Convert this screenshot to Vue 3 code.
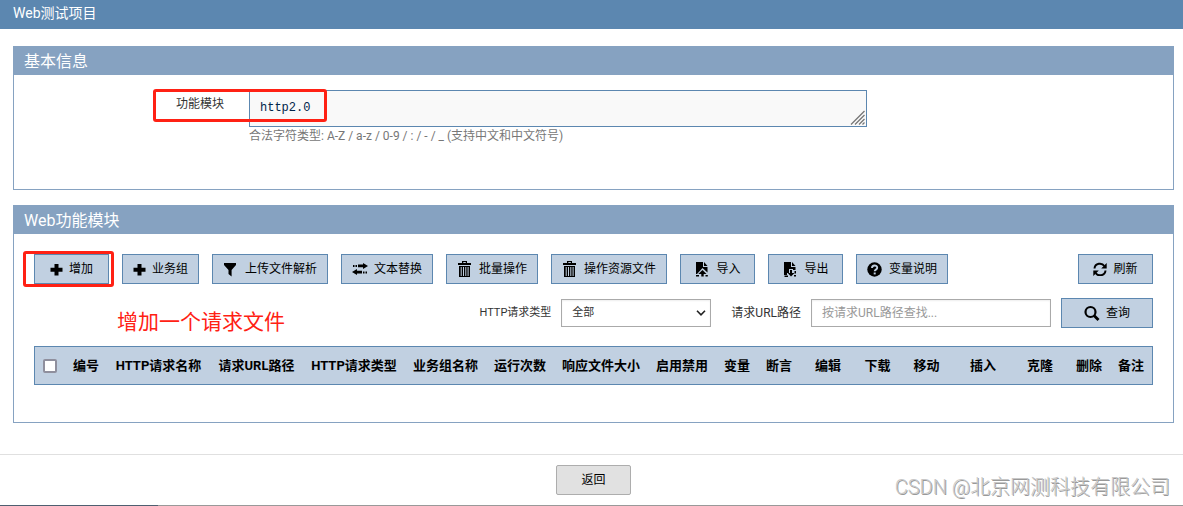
<script setup>
import { ref } from 'vue'

const moduleName = ref('http2.0')
const requestType = ref('all')
const urlPath = ref('')
const allChecked = ref(false)

const actions = [
  { label: '增加', icon: 'plus', marked: true },
  { label: '业务组', icon: 'plus' },
  { label: '上传文件解析', icon: 'filter' },
  { label: '文本替换', icon: 'swap' },
  { label: '批量操作', icon: 'trash' },
  { label: '操作资源文件', icon: 'trash' },
  { label: '导入', icon: 'import' },
  { label: '导出', icon: 'export' },
  { label: '变量说明', icon: 'help' },
]

const checkWeight = 30
const columns = [
  { label: '编号', weight: 42 },
  { label: 'HTTP请求名称', weight: 103 },
  { label: '请求URL路径', weight: 93 },
  { label: 'HTTP请求类型', weight: 102 },
  { label: '业务组名称', weight: 81 },
  { label: '运行次数', weight: 68 },
  { label: '响应文件大小', weight: 94 },
  { label: '启用禁用', weight: 68 },
  { label: '变量', weight: 42 },
  { label: '断言', weight: 42 },
  { label: '编辑', weight: 56 },
  { label: '下载', weight: 43 },
  { label: '移动', weight: 55 },
  { label: '插入', weight: 58 },
  { label: '克隆', weight: 56 },
  { label: '删除', weight: 42 },
  { label: '备注', weight: 42 },
]
const totalWeight = columns.reduce((sum, c) => sum + c.weight, checkWeight)
const share = (weight) => ({ width: (weight / totalWeight) * 100 + '%' })
</script>

<template>
  <div class="page">
    <header class="topbar">Web测试项目</header>

    <main class="content">
      <section class="panel basic">
        <h2 class="panel-title">基本信息</h2>
        <div class="form-row">
          <label class="form-label" for="module-name">功能模块</label>
          <div class="field">
            <div class="area-wrap">
              <textarea id="module-name" v-model="moduleName" class="area" rows="1" spellcheck="false"></textarea>
              <svg class="grip" viewBox="0 0 15 15" aria-hidden="true">
                <path d="M1 14.500 14.500 1M5 14.500 14.500 5M9 14.500 14.500 9M12.500 14.500l2-2" fill="none" stroke="#777" stroke-width="1.300" />
              </svg>
            </div>
            <p class="hint">合法字符类型: A-Z / a-z / 0-9 / : / - / _ (支持中文和中文符号)</p>
          </div>
          <span class="mark mark-field"></span>
        </div>
      </section>

      <section class="panel modules">
        <h2 class="panel-title">Web功能模块</h2>
        <div class="panel-body">
          <div class="toolbar">
            <button v-for="a in actions" :key="a.label" type="button" class="btn">
              <svg v-if="a.icon === 'plus'" class="icon plus" viewBox="0 0 13 13" aria-hidden="true">
                <path d="M4.500 1h4v3.700h4v4h-4v3.800h-4V8.700h-4v-4h4z" />
              </svg>
              <svg v-else-if="a.icon === 'filter'" class="icon" viewBox="0 0 16 16" aria-hidden="true">
                <path d="M1 2h12v2L8.600 9v6.500L5.500 13V9L1 4z" />
              </svg>
              <svg v-else-if="a.icon === 'swap'" class="icon" viewBox="0 0 16 16" aria-hidden="true">
                <path d="M6 3.500h5V2l5 3-5 3V6.300H6zM3.500 4H5v2H3.500zM1 4h1.500v2H1zM10 9.700H5V8l-5 3 5 3v-1.500h5zM11 10.500h1.500v2H11zM13.500 10.500H15v2h-1.500z" />
              </svg>
              <svg v-else-if="a.icon === 'trash'" class="icon" viewBox="0 0 16 16" aria-hidden="true">
                <path d="M5 0h5v2h4v2H1V2h4zM6.300 1v1h2.500V1zM2 5h11v11H2zM3.700 6v9h1V6zM6 6v9h1V6zM8.300 6v9h1V6zM10.600 6v9h1V6z" fill-rule="evenodd" />
              </svg>
              <svg v-else-if="a.icon === 'import'" class="icon" viewBox="0 0 16 16" aria-hidden="true">
                <path d="M1 1h7v5h4.500v5.500L7.500 7 2 13H1zM9 1l3.500 4H9zM7.500 9l4 4H8.700v2.500H6.300V13h-3zM1 14h3v1.500H1zM10.500 14h2.300v1.500h-2.300z" />
              </svg>
              <svg v-else-if="a.icon === 'export'" class="icon" viewBox="0 0 16 16" aria-hidden="true">
                <path d="M1 1h7v5h4.500v3H10V8H6v4H4v2H1zM9 1l3.500 4H9zM7 9h2v3h2.500L8 15.500 4.700 12H7zM1.500 14.500H5V16H1.500zM11 14h2v1.500h-2zM11.500 10H13v2.500h-1.500z" />
              </svg>
              <svg v-else class="icon" viewBox="0 0 16 16" aria-hidden="true">
                <circle cx="7.500" cy="8.500" r="7.200" />
                <path d="M5 7c0-3.200 5.200-3.200 5.200-.3 0 2-2.500 1.800-2.500 3.600" fill="none" stroke="#c1d0e1" stroke-width="1.900" />
                <path d="M6.700 11.500h2v1.900h-2z" fill="#c1d0e1" />
              </svg>
              <span>{{ a.label }}</span>
              <i v-if="a.marked" class="mark mark-button"></i>
            </button>
            <button type="button" class="btn refresh">
              <svg class="icon small" viewBox="0 0 14 14" aria-hidden="true">
                <path d="M1.500 6.500C2 1 9 .3 11.300 4M12.500 8.500C12 14 5 14.700 2.700 11" fill="none" stroke="#000" stroke-width="2" />
                <path d="M13.700 1v5.500H8.200zM.300 14V8.500h5.500z" />
              </svg>
              <span>刷新</span>
            </button>
          </div>

          <form class="filters" @submit.prevent>
            <p class="note">增加一个请求文件</p>
            <label class="type-label" for="request-type">HTTP请求类型</label>
            <div class="select-wrap">
              <select id="request-type" v-model="requestType" class="control select">
                <option value="all">全部</option>
              </select>
              <svg class="chevron" viewBox="0 0 10 6" aria-hidden="true">
                <path d="M1 .800l4 4 4-4" fill="none" stroke="#222" stroke-width="1.600" />
              </svg>
            </div>
            <label class="url-label" for="url-path">请求URL路径</label>
            <input id="url-path" v-model="urlPath" class="control url" type="text" placeholder="按请求URL路径查找..." />
            <button type="submit" class="btn search">
              <svg class="icon" viewBox="0 0 16 16" aria-hidden="true">
                <circle cx="6.500" cy="7" r="5" fill="none" stroke="#000" stroke-width="2.200" />
                <path d="M10 10.500l4.500 4.500" stroke="#000" stroke-width="2.800" />
              </svg>
              <span>查询</span>
            </button>
          </form>

          <table class="grid">
            <colgroup>
              <col :style="share(checkWeight)" />
              <col v-for="c in columns" :key="c.label" :style="share(c.weight)" />
            </colgroup>
            <thead>
              <tr>
                <th><input v-model="allChecked" class="check" type="checkbox" aria-label="全选" /></th>
                <th v-for="c in columns" :key="c.label" scope="col">{{ c.label }}</th>
              </tr>
            </thead>
          </table>
        </div>
      </section>
    </main>

    <footer class="footer">
      <button type="button" class="back">返回</button>
      <span class="watermark">CSDN @北京网测科技有限公司</span>
    </footer>
  </div>
</template>

<style>
body {
  margin: 0;
  background: #fff;
}
</style>

<style scoped>
.page {
  display: flex;
  flex-direction: column;
  min-height: 100vh;
  font: 12px/18px Roboto, "Noto Sans CJK SC", sans-serif;
  color: #333;
}
.page *,
.page {
  box-sizing: border-box;
}
button,
input,
select {
  font: inherit;
  margin: 0;
}
.topbar {
  padding: 0 13px 3px;
  background: #5c87b0;
  color: #fff;
  font-size: 14px;
  line-height: 26px;
}
.content {
  display: flex;
  flex-direction: column;
  gap: 15px;
  padding: 17px 9px 31px 13px;
}
.panel {
  border: 1px solid #86a2c1;
}
.panel-title {
  margin: 0;
  padding: 2px 10px 0;
  background: #86a2c1;
  color: #fff;
  font-size: 16px;
  font-weight: 400;
  line-height: 26px;
}
.basic {
  padding-bottom: 44px;
}
.form-row {
  position: relative;
  display: grid;
  grid-template-columns: 210px minmax(0, 618px);
  column-gap: 25px;
  margin-top: 15px;
}
.form-label {
  padding-top: 5px;
  text-align: right;
}
.area-wrap {
  position: relative;
}
.area {
  display: block;
  width: 100%;
  height: 37px;
  margin: 0;
  padding: 8px 10px;
  border: 1px solid #5c87b0;
  border-radius: 0;
  background: #f9f9f9;
  color: #00254a;
  font: 12px/18px "Liberation Mono", monospace;
  resize: none;
  overflow: hidden;
  outline: none;
}
.grip {
  position: absolute;
  right: 2px;
  bottom: 2px;
  width: 15px;
  height: 15px;
}
.hint {
  margin: 0;
  color: #777;
}
.mark {
  position: absolute;
  border: 3px solid #ff2114;
  border-radius: 3px;
  pointer-events: none;
}
.mark-field {
  top: -1px;
  left: 139px;
  width: 174px;
  height: 33px;
}
.mark-button {
  inset: -4px -6px -4px -12px;
}
.panel-body {
  padding: 20px 20px 37px;
}
.toolbar {
  display: flex;
  flex-wrap: wrap;
  gap: 13px;
}
.btn {
  position: relative;
  display: inline-flex;
  align-items: center;
  justify-content: center;
  gap: 6px;
  min-width: 75px;
  height: 30px;
  padding: 0 10px;
  border: 1px solid #5c87b0;
  border-radius: 0;
  background: #c1d0e1;
  color: #000;
  white-space: nowrap;
}
.icon {
  flex: none;
  width: 16px;
  height: 16px;
}
.icon.plus {
  width: 13px;
  height: 13px;
}
.icon.small {
  width: 14px;
  height: 14px;
}
.refresh {
  margin-left: auto;
}
.filters {
  position: relative;
  display: flex;
  align-items: center;
  justify-content: flex-end;
  gap: 10px;
  margin: 14px 0 18px;
}
.note {
  position: absolute;
  top: 9px;
  left: 83px;
  margin: 0;
  color: #ff2114;
  font-size: 21px;
  line-height: 30px;
}
.control {
  height: 28px;
  border: 1px solid #aaa;
  border-radius: 0;
  background: #fff;
  color: #333;
  padding: 0 10px;
  outline: none;
  box-shadow: inset 0 1px 2px #eee;
}
.type-label,
.select {
  font-size: 11px;
}
.select-wrap {
  position: relative;
}
.select {
  display: block;
  width: 150px;
  appearance: none;
}
.chevron {
  position: absolute;
  top: 11px;
  right: 5px;
  width: 10px;
  height: 6px;
  pointer-events: none;
}
.url-label {
  margin-left: 10px;
}
.url {
  width: 240px;
}
.url::placeholder {
  color: #999;
}
.search {
  min-width: 92px;
}
.grid {
  width: 100%;
  table-layout: fixed;
  border-collapse: separate;
  border-spacing: 0;
  border: 1px solid #5c87b0;
  background: #c1d0e1;
}
.grid th {
  height: 37px;
  padding: 0;
  color: #000;
  font-size: 13px;
  font-weight: 700;
  line-height: 18px;
  white-space: nowrap;
}
.check {
  display: block;
  appearance: none;
  width: 14px;
  height: 14px;
  margin: 1px auto 0;
  border: 2px solid #8f8f9d;
  border-radius: 2px;
  background: #fff;
}
.check:checked {
  background: #5c87b0;
}
.footer {
  position: relative;
  flex: 1;
  display: flex;
  justify-content: center;
  align-items: flex-start;
  padding: 10px 9px 10px 13px;
  border-top: 1px solid #e0e0e0;
  border-bottom: 1px solid #999;
}
.footer::after {
  content: "";
  position: absolute;
  left: 0;
  bottom: -1px;
  width: 158px;
  height: 1px;
  background: #4e5f70;
}
.back {
  width: 75px;
  height: 30px;
  padding: 0;
  border: 1px solid #adadad;
  border-radius: 2px;
  background: #e1e1e1;
  color: #000;
}
.watermark {
  position: absolute;
  right: 13px;
  bottom: 3px;
  color: #c8c8c8;
  font-size: 20px;
  font-weight: 300;
  line-height: 30px;
  text-shadow: 1px 1px 0 #999;
}
</style>
